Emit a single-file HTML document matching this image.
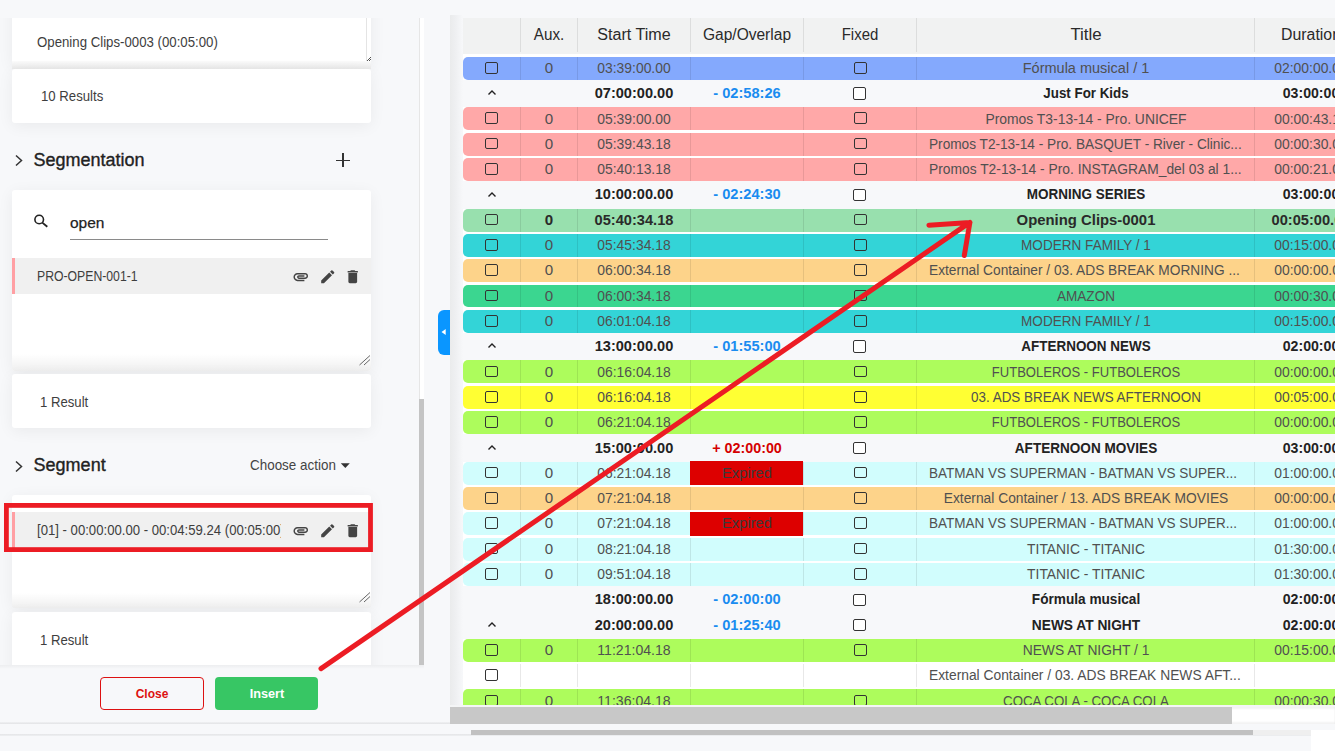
<!DOCTYPE html>
<html><head><meta charset="utf-8"><title>Schedule</title><style>
html,body{margin:0;padding:0}
body{width:1335px;height:751px;overflow:hidden;background:#f7f8fa;position:relative;font-family:"Liberation Sans",sans-serif}
.t{position:absolute;white-space:nowrap}
.b{position:absolute}
.clip{position:absolute;left:0;top:0;width:1335px;height:751px}
.card{position:absolute;background:#fff;border-radius:3px;box-shadow:0 3px 16px rgba(0,0,0,0.06)}
.cb{position:absolute;box-sizing:border-box;border:1.8px solid #333;border-radius:2px}
</style></head><body>

<div class="clip" style="clip-path:inset(18px 0 86px 0)">
<div class="card" style="left:12px;top:-20px;width:359px;height:85px"></div>
<div class="b" style="left:12.00px;top:61.30px;width:359.00px;height:7.70px;background:linear-gradient(#fbfbfb,#e9e9e9)"></div>
<div class="b" style="left:366.00px;top:0.00px;width:1.00px;height:61.00px;background:#e4e4e4"></div>
<div class="t" style="left:36.70px;top:35.00px;font-size:14.2px;line-height:14.2px;color:#3e3e3e;font-weight:normal;transform-origin:0 0;transform:scaleX(0.9321);">Opening Clips-0003 (00:05:00)</div>
<svg class="b" style="left:366px;top:55px" width="6" height="7"><path d="M1 6L5 2M3 6L5 4" stroke="#555" stroke-width="1"/></svg>
<div class="card" style="left:12px;top:69px;width:359px;height:53.6px"></div>
<div class="t" style="left:40.50px;top:89.00px;font-size:14.2px;line-height:14.2px;color:#3e3e3e;font-weight:normal;transform-origin:0 0;transform:scaleX(0.9286);">10 Results</div>
<svg class="b" style="left:12px;top:152px" width="14" height="16"><path d="M4 3.5L9.5 8.5L4 13.5" fill="none" stroke="#333" stroke-width="1.5"/></svg>
<div class="t" style="left:33.50px;top:151.00px;font-size:18px;line-height:18px;color:#222;font-weight:normal;transform-origin:0 0;-webkit-text-stroke:0.35px #222">Segmentation</div>
<div class="b" style="left:336.00px;top:159.60px;width:14.00px;height:1.70px;background:#333"></div>
<div class="b" style="left:342.20px;top:153.30px;width:1.70px;height:14.10px;background:#333"></div>
<div class="card" style="left:12px;top:190px;width:359px;height:181px"></div>
<svg class="b" style="left:30px;top:210px" width="20" height="20"><circle cx="9.2" cy="9.5" r="4.3" fill="none" stroke="#222" stroke-width="1.6"/><path d="M12.3 12.6L17.3 16.8" stroke="#222" stroke-width="1.8"/></svg>
<div class="t" style="left:70.00px;top:215.00px;font-size:15.5px;line-height:15.5px;color:#222;font-weight:normal;transform-origin:0 0;-webkit-text-stroke:0.25px #222">open</div>
<div class="b" style="left:70.00px;top:238.80px;width:258.00px;height:1.20px;background:#8a8a8a"></div>
<div class="b" style="left:12.00px;top:258.20px;width:359.00px;height:35.60px;background:#f0f0f0"></div>
<div class="b" style="left:12.00px;top:258.20px;width:3.00px;height:35.60px;background:#ff9fa3"></div>
<div class="t" style="left:36.90px;top:269.00px;font-size:14.2px;line-height:14.2px;color:#3e3e3e;font-weight:normal;transform-origin:0 0;transform:scaleX(0.8622);">PRO-OPEN-001-1</div>
<svg class="b" style="left:292.40px;top:267.70px" width="17.5" height="17.5" viewBox="0 0 24 24"><path fill="#444" d="M2 12.5C2 9.46 4.46 7 7.5 7H18c2.21 0 4 1.79 4 4s-1.79 4-4 4H9.5C8.12 15 7 13.88 7 12.5S8.12 10 9.5 10H17v2H9.41c-.55 0-.55 1 0 1H18c1.1 0 2-.9 2-2s-.9-2-2-2H7.5C5.57 9 4 10.57 4 12.5S5.57 16 7.5 16H17v2H7.5C4.46 18 2 15.54 2 12.5z"/></svg>
<svg class="b" style="left:318.70px;top:267.70px" width="17.5" height="17.5" viewBox="0 0 24 24"><path fill="#444" d="M3 17.25V21h3.75L17.81 9.94l-3.75-3.75L3 17.25zM20.71 7.04c.39-.39.39-1.02 0-1.41l-2.34-2.34c-.39-.39-1.02-.39-1.41 0l-1.83 1.83 3.75 3.75 1.83-1.83z"/></svg>
<svg class="b" style="left:343.70px;top:267.70px" width="17.5" height="17.5" viewBox="0 0 24 24"><path fill="#444" d="M6 19c0 1.1.9 2 2 2h8c1.1 0 2-.9 2-2V7H6v12zM19 4h-3.5l-1-1h-5l-1 1H5v2h14V4z"/></svg>
<div class="b" style="left:12.00px;top:354.00px;width:359.00px;height:16.50px;background:linear-gradient(rgba(255,255,255,0),#efefef);border-radius:0 0 3px 3px"></div>
<svg class="b" style="left:358px;top:354px" width="13" height="12"><path d="M1.5 11L12 1.5M6 11L12 5.5" stroke="#666" stroke-width="1"/></svg>
<div class="card" style="left:12px;top:374px;width:359px;height:53.5px"></div>
<div class="t" style="left:40.30px;top:395.00px;font-size:14.2px;line-height:14.2px;color:#3e3e3e;font-weight:normal;transform-origin:0 0;transform:scaleX(0.9272);">1 Result</div>
<svg class="b" style="left:12px;top:457.5px" width="14" height="16"><path d="M4 3.5L9.5 8.5L4 13.5" fill="none" stroke="#333" stroke-width="1.5"/></svg>
<div class="t" style="left:33.60px;top:456.00px;font-size:18px;line-height:18px;color:#222;font-weight:normal;transform-origin:0 0;-webkit-text-stroke:0.35px #222">Segment</div>
<div class="t" style="left:249.60px;top:458.00px;font-size:14.6px;line-height:14.6px;color:#444;font-weight:normal;transform-origin:0 0;transform:scaleX(0.9203);">Choose action</div>
<svg class="b" style="left:340px;top:462px" width="11" height="7"><path d="M0.8 1.2H9.8L5.3 6z" fill="#333"/></svg>
<div class="card" style="left:12px;top:495px;width:359px;height:112px"></div>
<div class="b" style="left:12.00px;top:512.10px;width:359.00px;height:35.90px;background:#f0f0f0"></div>
<div class="b" style="left:12.00px;top:512.00px;width:3.00px;height:36.00px;background:#ff9fa3"></div>
<div class="b" style="left:0;top:512px;width:280.5px;height:36px;overflow:hidden">
<div class="t" style="left:36.5px;top:11.08px;font-size:14.2px;line-height:14.2px;color:#3e3e3e;transform-origin:0 0;transform:scaleX(0.9262)">[01] - 00:00:00.00 - 00:04:59.24 (00:05:00)</div>
</div>
<svg class="b" style="left:292.40px;top:521.60px" width="17.5" height="17.5" viewBox="0 0 24 24"><path fill="#444" d="M2 12.5C2 9.46 4.46 7 7.5 7H18c2.21 0 4 1.79 4 4s-1.79 4-4 4H9.5C8.12 15 7 13.88 7 12.5S8.12 10 9.5 10H17v2H9.41c-.55 0-.55 1 0 1H18c1.1 0 2-.9 2-2s-.9-2-2-2H7.5C5.57 9 4 10.57 4 12.5S5.57 16 7.5 16H17v2H7.5C4.46 18 2 15.54 2 12.5z"/></svg>
<svg class="b" style="left:318.70px;top:521.60px" width="17.5" height="17.5" viewBox="0 0 24 24"><path fill="#444" d="M3 17.25V21h3.75L17.81 9.94l-3.75-3.75L3 17.25zM20.71 7.04c.39-.39.39-1.02 0-1.41l-2.34-2.34c-.39-.39-1.02-.39-1.41 0l-1.83 1.83 3.75 3.75 1.83-1.83z"/></svg>
<svg class="b" style="left:343.70px;top:521.60px" width="17.5" height="17.5" viewBox="0 0 24 24"><path fill="#444" d="M6 19c0 1.1.9 2 2 2h8c1.1 0 2-.9 2-2V7H6v12zM19 4h-3.5l-1-1h-5l-1 1H5v2h14V4z"/></svg>
<div class="b" style="left:12.00px;top:593.00px;width:359.00px;height:14.50px;background:linear-gradient(rgba(255,255,255,0),#efefef);border-radius:0 0 3px 3px"></div>
<svg class="b" style="left:358px;top:591px" width="13" height="12"><path d="M1.5 11L12 1.5M6 11L12 5.5" stroke="#666" stroke-width="1"/></svg>
<div class="card" style="left:12px;top:611.7px;width:359px;height:80px"></div>
<div class="t" style="left:40.30px;top:633.00px;font-size:14.2px;line-height:14.2px;color:#3e3e3e;font-weight:normal;transform-origin:0 0;transform:scaleX(0.9272);">1 Result</div>
</div>
<div class="b" style="left:0.00px;top:665.00px;width:424.00px;height:4.00px;background:linear-gradient(rgba(0,0,0,0.045),rgba(0,0,0,0))"></div>
<div class="b" style="left:419.00px;top:18.00px;width:5.00px;height:647.00px;background:#fff;border-left:1px solid #e6e6e6;box-sizing:border-box"></div>
<div class="b" style="left:419.00px;top:399.00px;width:5.00px;height:266.00px;background:#c4c4c4"></div>
<div class="b" style="left:100px;top:677px;width:104px;height:33px;box-sizing:border-box;border:1.3px solid #dd1111;border-radius:4px"></div>
<div class="t" style="left:101.90px;top:687.00px;width:100px;text-align:center;font-size:13.6px;line-height:13.6px;color:#dd1111;font-weight:bold;transform:scaleX(0.8829);">Close</div>
<div class="b" style="left:215px;top:677px;width:103px;height:33px;background:#37c664;border-radius:4px"></div>
<div class="t" style="left:216.70px;top:687.00px;width:100px;text-align:center;font-size:13.6px;line-height:13.6px;color:#fff;font-weight:bold;transform:scaleX(0.9315);">Insert</div>
<div class="b" style="left:0.00px;top:722.00px;width:1335.00px;height:2.00px;background:linear-gradient(#f0f1f3,#e2e3e5)"></div>
<div class="b" style="left:0.00px;top:733.50px;width:1311.00px;height:2.00px;background:linear-gradient(#e4e5e7,#eef0f2)"></div>
<div class="b" style="left:471.00px;top:730.00px;width:840.00px;height:5.00px;background:#efefef"></div>
<div class="b" style="left:471.00px;top:730.00px;width:782.00px;height:5.00px;background:#c1c1c1"></div>
<div class="b" style="left:1311.00px;top:730.00px;width:24.00px;height:21.00px;background:#fff"></div>
<div class="b" style="left:438.00px;top:310.00px;width:12.00px;height:45.00px;background:#0a96ff;border-radius:6px 0 0 6px"></div>
<svg class="b" style="left:441px;top:328px" width="6" height="9"><path d="M0.5 4L4.7 1V7z" fill="#fff"/></svg>
<div class="clip" style="clip-path:inset(0 0 46px 450px)">
<div class="b" style="left:450.00px;top:15.00px;width:13.00px;height:690.00px;background:linear-gradient(90deg,#eaebec 0%,#eff0f2 45%,#f7f8fa 100%)"></div>
<div class="b" style="left:463.00px;top:18.00px;width:872.00px;height:35.80px;background:#f1f2f2"></div>
<div class="b" style="left:519.70px;top:18.00px;width:1.00px;height:33.80px;background:#dcdddd"></div>
<div class="b" style="left:576.70px;top:18.00px;width:1.00px;height:33.80px;background:#dcdddd"></div>
<div class="b" style="left:689.50px;top:18.00px;width:1.00px;height:33.80px;background:#dcdddd"></div>
<div class="b" style="left:802.50px;top:18.00px;width:1.00px;height:33.80px;background:#dcdddd"></div>
<div class="b" style="left:915.70px;top:18.00px;width:1.00px;height:33.80px;background:#dcdddd"></div>
<div class="b" style="left:1253.70px;top:18.00px;width:1.00px;height:33.80px;background:#dcdddd"></div>
<div class="b" style="left:463.00px;top:53.80px;width:872.00px;height:651.20px;background:#fff"></div>
<div class="t" style="left:449.00px;top:27.00px;width:200px;text-align:center;font-size:15.6px;line-height:15.6px;color:#2a2a2a;font-weight:normal;transform:scaleX(0.9770);">Aux.</div>
<div class="t" style="left:533.90px;top:27.00px;width:200px;text-align:center;font-size:15.6px;line-height:15.6px;color:#2a2a2a;font-weight:normal;transform:scaleX(1.0326);">Start Time</div>
<div class="t" style="left:646.80px;top:27.00px;width:200px;text-align:center;font-size:15.6px;line-height:15.6px;color:#2a2a2a;font-weight:normal;transform:scaleX(0.9961);">Gap/Overlap</div>
<div class="t" style="left:759.90px;top:27.00px;width:200px;text-align:center;font-size:15.6px;line-height:15.6px;color:#2a2a2a;font-weight:normal;transform:scaleX(0.9594);">Fixed</div>
<div class="t" style="left:985.50px;top:27.00px;width:200px;text-align:center;font-size:15.6px;line-height:15.6px;color:#2a2a2a;font-weight:normal;transform:scaleX(1.0798);">Title</div>
<div class="t" style="left:1211.00px;top:27.00px;width:200px;text-align:center;font-size:15.6px;line-height:15.6px;color:#2a2a2a;font-weight:normal;transform:scaleX(1.0175);">Duration</div>
<div class="b" style="left:463.00px;top:56.80px;width:872.00px;height:22.90px;background:#84a9fd;border-radius:5px 0 0 5px"></div>
<div class="b" style="left:519.70px;top:56.80px;width:1.00px;height:22.90px;background:rgba(0,0,0,0.09)"></div>
<div class="b" style="left:576.70px;top:56.80px;width:1.00px;height:22.90px;background:rgba(0,0,0,0.09)"></div>
<div class="b" style="left:689.50px;top:56.80px;width:1.00px;height:22.90px;background:rgba(0,0,0,0.09)"></div>
<div class="b" style="left:802.50px;top:56.80px;width:1.00px;height:22.90px;background:rgba(0,0,0,0.09)"></div>
<div class="b" style="left:915.70px;top:56.80px;width:1.00px;height:22.90px;background:rgba(0,0,0,0.09)"></div>
<div class="b" style="left:1253.70px;top:56.80px;width:1.00px;height:22.90px;background:rgba(0,0,0,0.09)"></div>
<div class="cb" style="left:485.2px;top:61.85px;width:12.8px;height:11.7px"></div>
<div class="cb" style="left:854.2px;top:61.85px;width:12.8px;height:11.7px"></div>
<div class="t" style="left:519.00px;top:60.00px;width:60px;text-align:center;font-size:15.1px;line-height:15.1px;color:#505050;font-weight:normal;">0</div>
<div class="t" style="left:563.90px;top:60.00px;width:140px;text-align:center;font-size:15.1px;line-height:15.1px;color:#505050;font-weight:normal;transform:scaleX(0.9201);">03:39:00.00</div>
<div class="t" style="left:905.50px;top:60.00px;width:360px;text-align:center;font-size:15.1px;line-height:15.1px;color:#505050;font-weight:normal;transform:scaleX(0.9610);">Fórmula musical / 1</div>
<div class="t" style="left:1241.00px;top:60.00px;width:140px;text-align:center;font-size:15.1px;line-height:15.1px;color:#505050;font-weight:normal;transform:scaleX(0.9201);">02:00:00.00</div>
<div class="b" style="left:463.00px;top:79.70px;width:872.00px;height:27.71px;background:#f7f8fa"></div>
<svg class="b" style="left:486.5px;top:89.36px" width="10" height="7"><path d="M1.5 5.5L5 2L8.5 5.5" fill="none" stroke="#222" stroke-width="1.4"/></svg>
<div class="t" style="left:563.90px;top:85.00px;width:140px;text-align:center;font-size:15.3px;line-height:15.3px;color:#222;font-weight:bold;transform:scaleX(0.9526);">07:00:00.00</div>
<div class="t" style="left:676.80px;top:85.00px;width:140px;text-align:center;font-size:15.3px;line-height:15.3px;color:#1a8cf0;font-weight:bold;transform:scaleX(0.9548);">- 02:58:26</div>
<div class="cb" style="left:853.2px;top:87.36px;width:13px;height:12.6px;background:#fff"></div>
<div class="t" style="left:915.50px;top:85.00px;width:340px;text-align:center;font-size:15.3px;line-height:15.3px;color:#222;font-weight:bold;transform:scaleX(0.8725);">Just For Kids</div>
<div class="t" style="left:1241.00px;top:85.00px;width:140px;text-align:center;font-size:15.3px;line-height:15.3px;color:#222;font-weight:bold;transform:scaleX(0.9225);">03:00:00</div>
<div class="b" style="left:463.00px;top:107.41px;width:872.00px;height:22.90px;background:#ffa8a8;border-radius:5px 0 0 5px"></div>
<div class="b" style="left:519.70px;top:107.41px;width:1.00px;height:22.90px;background:rgba(0,0,0,0.09)"></div>
<div class="b" style="left:576.70px;top:107.41px;width:1.00px;height:22.90px;background:rgba(0,0,0,0.09)"></div>
<div class="b" style="left:689.50px;top:107.41px;width:1.00px;height:22.90px;background:rgba(0,0,0,0.09)"></div>
<div class="b" style="left:802.50px;top:107.41px;width:1.00px;height:22.90px;background:rgba(0,0,0,0.09)"></div>
<div class="b" style="left:915.70px;top:107.41px;width:1.00px;height:22.90px;background:rgba(0,0,0,0.09)"></div>
<div class="b" style="left:1253.70px;top:107.41px;width:1.00px;height:22.90px;background:rgba(0,0,0,0.09)"></div>
<div class="cb" style="left:485.2px;top:112.46px;width:12.8px;height:11.7px"></div>
<div class="cb" style="left:854.2px;top:112.46px;width:12.8px;height:11.7px"></div>
<div class="t" style="left:519.00px;top:111.00px;width:60px;text-align:center;font-size:15.1px;line-height:15.1px;color:#505050;font-weight:normal;">0</div>
<div class="t" style="left:563.90px;top:111.00px;width:140px;text-align:center;font-size:15.1px;line-height:15.1px;color:#505050;font-weight:normal;transform:scaleX(0.9201);">05:39:00.00</div>
<div class="t" style="left:905.50px;top:111.00px;width:360px;text-align:center;font-size:15.1px;line-height:15.1px;color:#505050;font-weight:normal;transform:scaleX(0.9199);">Promos T3-13-14 - Pro. UNICEF</div>
<div class="t" style="left:1241.00px;top:111.00px;width:140px;text-align:center;font-size:15.1px;line-height:15.1px;color:#505050;font-weight:normal;transform:scaleX(0.9201);">00:00:43.18</div>
<div class="b" style="left:463.00px;top:132.72px;width:872.00px;height:22.90px;background:#ffa8a8;border-radius:5px 0 0 5px"></div>
<div class="b" style="left:519.70px;top:132.72px;width:1.00px;height:22.90px;background:rgba(0,0,0,0.09)"></div>
<div class="b" style="left:576.70px;top:132.72px;width:1.00px;height:22.90px;background:rgba(0,0,0,0.09)"></div>
<div class="b" style="left:689.50px;top:132.72px;width:1.00px;height:22.90px;background:rgba(0,0,0,0.09)"></div>
<div class="b" style="left:802.50px;top:132.72px;width:1.00px;height:22.90px;background:rgba(0,0,0,0.09)"></div>
<div class="b" style="left:915.70px;top:132.72px;width:1.00px;height:22.90px;background:rgba(0,0,0,0.09)"></div>
<div class="b" style="left:1253.70px;top:132.72px;width:1.00px;height:22.90px;background:rgba(0,0,0,0.09)"></div>
<div class="cb" style="left:485.2px;top:137.77px;width:12.8px;height:11.7px"></div>
<div class="cb" style="left:854.2px;top:137.77px;width:12.8px;height:11.7px"></div>
<div class="t" style="left:519.00px;top:136.00px;width:60px;text-align:center;font-size:15.1px;line-height:15.1px;color:#505050;font-weight:normal;">0</div>
<div class="t" style="left:563.90px;top:136.00px;width:140px;text-align:center;font-size:15.1px;line-height:15.1px;color:#505050;font-weight:normal;transform:scaleX(0.9201);">05:39:43.18</div>
<div class="t" style="left:928.80px;top:136.00px;font-size:15.1px;line-height:15.1px;color:#505050;font-weight:normal;transform-origin:0 0;transform:scaleX(0.9041);">Promos T2-13-14 - Pro. BASQUET - River - Clinic...</div>
<div class="t" style="left:1241.00px;top:136.00px;width:140px;text-align:center;font-size:15.1px;line-height:15.1px;color:#505050;font-weight:normal;transform:scaleX(0.9201);">00:00:30.00</div>
<div class="b" style="left:463.00px;top:158.03px;width:872.00px;height:22.90px;background:#ffa8a8;border-radius:5px 0 0 5px"></div>
<div class="b" style="left:519.70px;top:158.03px;width:1.00px;height:22.90px;background:rgba(0,0,0,0.09)"></div>
<div class="b" style="left:576.70px;top:158.03px;width:1.00px;height:22.90px;background:rgba(0,0,0,0.09)"></div>
<div class="b" style="left:689.50px;top:158.03px;width:1.00px;height:22.90px;background:rgba(0,0,0,0.09)"></div>
<div class="b" style="left:802.50px;top:158.03px;width:1.00px;height:22.90px;background:rgba(0,0,0,0.09)"></div>
<div class="b" style="left:915.70px;top:158.03px;width:1.00px;height:22.90px;background:rgba(0,0,0,0.09)"></div>
<div class="b" style="left:1253.70px;top:158.03px;width:1.00px;height:22.90px;background:rgba(0,0,0,0.09)"></div>
<div class="cb" style="left:485.2px;top:163.08px;width:12.8px;height:11.7px"></div>
<div class="cb" style="left:854.2px;top:163.08px;width:12.8px;height:11.7px"></div>
<div class="t" style="left:519.00px;top:161.00px;width:60px;text-align:center;font-size:15.1px;line-height:15.1px;color:#505050;font-weight:normal;">0</div>
<div class="t" style="left:563.90px;top:161.00px;width:140px;text-align:center;font-size:15.1px;line-height:15.1px;color:#505050;font-weight:normal;transform:scaleX(0.9201);">05:40:13.18</div>
<div class="t" style="left:928.80px;top:161.00px;font-size:15.1px;line-height:15.1px;color:#505050;font-weight:normal;transform-origin:0 0;transform:scaleX(0.9151);">Promos T2-13-14 - Pro. INSTAGRAM_del 03 al 1...</div>
<div class="t" style="left:1241.00px;top:161.00px;width:140px;text-align:center;font-size:15.1px;line-height:15.1px;color:#505050;font-weight:normal;transform:scaleX(0.9201);">00:00:21.00</div>
<div class="b" style="left:463.00px;top:180.93px;width:872.00px;height:27.71px;background:#f7f8fa"></div>
<svg class="b" style="left:486.5px;top:190.58px" width="10" height="7"><path d="M1.5 5.5L5 2L8.5 5.5" fill="none" stroke="#222" stroke-width="1.4"/></svg>
<div class="t" style="left:563.90px;top:186.00px;width:140px;text-align:center;font-size:15.3px;line-height:15.3px;color:#222;font-weight:bold;transform:scaleX(0.9526);">10:00:00.00</div>
<div class="t" style="left:676.80px;top:186.00px;width:140px;text-align:center;font-size:15.3px;line-height:15.3px;color:#1a8cf0;font-weight:bold;transform:scaleX(0.9548);">- 02:24:30</div>
<div class="cb" style="left:853.2px;top:188.58px;width:13px;height:12.6px;background:#fff"></div>
<div class="t" style="left:915.50px;top:186.00px;width:340px;text-align:center;font-size:15.3px;line-height:15.3px;color:#222;font-weight:bold;transform:scaleX(0.8822);">MORNING SERIES</div>
<div class="t" style="left:1241.00px;top:186.00px;width:140px;text-align:center;font-size:15.3px;line-height:15.3px;color:#222;font-weight:bold;transform:scaleX(0.9225);">03:00:00</div>
<div class="b" style="left:463.00px;top:208.64px;width:872.00px;height:22.90px;background:#98e0ae;border-radius:5px 0 0 5px"></div>
<div class="b" style="left:519.70px;top:208.64px;width:1.00px;height:22.90px;background:rgba(0,0,0,0.09)"></div>
<div class="b" style="left:576.70px;top:208.64px;width:1.00px;height:22.90px;background:rgba(0,0,0,0.09)"></div>
<div class="b" style="left:689.50px;top:208.64px;width:1.00px;height:22.90px;background:rgba(0,0,0,0.09)"></div>
<div class="b" style="left:802.50px;top:208.64px;width:1.00px;height:22.90px;background:rgba(0,0,0,0.09)"></div>
<div class="b" style="left:915.70px;top:208.64px;width:1.00px;height:22.90px;background:rgba(0,0,0,0.09)"></div>
<div class="b" style="left:1253.70px;top:208.64px;width:1.00px;height:22.90px;background:rgba(0,0,0,0.09)"></div>
<div class="cb" style="left:485.2px;top:213.69px;width:12.8px;height:11.7px"></div>
<div class="cb" style="left:854.2px;top:213.69px;width:12.8px;height:11.7px"></div>
<div class="t" style="left:519.00px;top:212.00px;width:60px;text-align:center;font-size:15.1px;line-height:15.1px;color:#2a2a2a;font-weight:bold;">0</div>
<div class="t" style="left:563.90px;top:212.00px;width:140px;text-align:center;font-size:15.1px;line-height:15.1px;color:#2a2a2a;font-weight:bold;transform:scaleX(0.9676);">05:40:34.18</div>
<div class="t" style="left:905.50px;top:212.00px;width:360px;text-align:center;font-size:15.1px;line-height:15.1px;color:#2a2a2a;font-weight:bold;transform:scaleX(0.9853);">Opening Clips-0001</div>
<div class="t" style="left:1241.00px;top:212.00px;width:140px;text-align:center;font-size:15.1px;line-height:15.1px;color:#2a2a2a;font-weight:bold;transform:scaleX(0.9676);">00:05:00.00</div>
<div class="b" style="left:463.00px;top:233.95px;width:872.00px;height:22.90px;background:#33d4d7;border-radius:5px 0 0 5px"></div>
<div class="b" style="left:519.70px;top:233.95px;width:1.00px;height:22.90px;background:rgba(0,0,0,0.09)"></div>
<div class="b" style="left:576.70px;top:233.95px;width:1.00px;height:22.90px;background:rgba(0,0,0,0.09)"></div>
<div class="b" style="left:689.50px;top:233.95px;width:1.00px;height:22.90px;background:rgba(0,0,0,0.09)"></div>
<div class="b" style="left:802.50px;top:233.95px;width:1.00px;height:22.90px;background:rgba(0,0,0,0.09)"></div>
<div class="b" style="left:915.70px;top:233.95px;width:1.00px;height:22.90px;background:rgba(0,0,0,0.09)"></div>
<div class="b" style="left:1253.70px;top:233.95px;width:1.00px;height:22.90px;background:rgba(0,0,0,0.09)"></div>
<div class="cb" style="left:485.2px;top:239.00px;width:12.8px;height:11.7px"></div>
<div class="cb" style="left:854.2px;top:239.00px;width:12.8px;height:11.7px"></div>
<div class="t" style="left:519.00px;top:237.00px;width:60px;text-align:center;font-size:15.1px;line-height:15.1px;color:#505050;font-weight:normal;">0</div>
<div class="t" style="left:563.90px;top:237.00px;width:140px;text-align:center;font-size:15.1px;line-height:15.1px;color:#505050;font-weight:normal;transform:scaleX(0.9201);">05:45:34.18</div>
<div class="t" style="left:905.50px;top:237.00px;width:360px;text-align:center;font-size:15.1px;line-height:15.1px;color:#505050;font-weight:normal;transform:scaleX(0.8983);">MODERN FAMILY / 1</div>
<div class="t" style="left:1241.00px;top:237.00px;width:140px;text-align:center;font-size:15.1px;line-height:15.1px;color:#505050;font-weight:normal;transform:scaleX(0.9201);">00:15:00.00</div>
<div class="b" style="left:463.00px;top:259.26px;width:872.00px;height:22.90px;background:#fdd38a;border-radius:5px 0 0 5px"></div>
<div class="b" style="left:519.70px;top:259.26px;width:1.00px;height:22.90px;background:rgba(0,0,0,0.09)"></div>
<div class="b" style="left:576.70px;top:259.26px;width:1.00px;height:22.90px;background:rgba(0,0,0,0.09)"></div>
<div class="b" style="left:689.50px;top:259.26px;width:1.00px;height:22.90px;background:rgba(0,0,0,0.09)"></div>
<div class="b" style="left:802.50px;top:259.26px;width:1.00px;height:22.90px;background:rgba(0,0,0,0.09)"></div>
<div class="b" style="left:915.70px;top:259.26px;width:1.00px;height:22.90px;background:rgba(0,0,0,0.09)"></div>
<div class="b" style="left:1253.70px;top:259.26px;width:1.00px;height:22.90px;background:rgba(0,0,0,0.09)"></div>
<div class="cb" style="left:485.2px;top:264.31px;width:12.8px;height:11.7px"></div>
<div class="cb" style="left:854.2px;top:264.31px;width:12.8px;height:11.7px"></div>
<div class="t" style="left:519.00px;top:262.00px;width:60px;text-align:center;font-size:15.1px;line-height:15.1px;color:#505050;font-weight:normal;">0</div>
<div class="t" style="left:563.90px;top:262.00px;width:140px;text-align:center;font-size:15.1px;line-height:15.1px;color:#505050;font-weight:normal;transform:scaleX(0.9201);">06:00:34.18</div>
<div class="t" style="left:928.80px;top:262.00px;font-size:15.1px;line-height:15.1px;color:#505050;font-weight:normal;transform-origin:0 0;transform:scaleX(0.9083);">External Container / 03. ADS BREAK MORNING ...</div>
<div class="t" style="left:1241.00px;top:262.00px;width:140px;text-align:center;font-size:15.1px;line-height:15.1px;color:#505050;font-weight:normal;transform:scaleX(0.9201);">00:00:00.00</div>
<div class="b" style="left:463.00px;top:284.56px;width:872.00px;height:22.90px;background:#3bd690;border-radius:5px 0 0 5px"></div>
<div class="b" style="left:519.70px;top:284.56px;width:1.00px;height:22.90px;background:rgba(0,0,0,0.09)"></div>
<div class="b" style="left:576.70px;top:284.56px;width:1.00px;height:22.90px;background:rgba(0,0,0,0.09)"></div>
<div class="b" style="left:689.50px;top:284.56px;width:1.00px;height:22.90px;background:rgba(0,0,0,0.09)"></div>
<div class="b" style="left:802.50px;top:284.56px;width:1.00px;height:22.90px;background:rgba(0,0,0,0.09)"></div>
<div class="b" style="left:915.70px;top:284.56px;width:1.00px;height:22.90px;background:rgba(0,0,0,0.09)"></div>
<div class="b" style="left:1253.70px;top:284.56px;width:1.00px;height:22.90px;background:rgba(0,0,0,0.09)"></div>
<div class="cb" style="left:485.2px;top:289.61px;width:12.8px;height:11.7px"></div>
<div class="cb" style="left:854.2px;top:289.61px;width:12.8px;height:11.7px"></div>
<div class="t" style="left:519.00px;top:288.00px;width:60px;text-align:center;font-size:15.1px;line-height:15.1px;color:#505050;font-weight:normal;">0</div>
<div class="t" style="left:563.90px;top:288.00px;width:140px;text-align:center;font-size:15.1px;line-height:15.1px;color:#505050;font-weight:normal;transform:scaleX(0.9201);">06:00:34.18</div>
<div class="t" style="left:905.50px;top:288.00px;width:360px;text-align:center;font-size:15.1px;line-height:15.1px;color:#505050;font-weight:normal;transform:scaleX(0.8994);">AMAZON</div>
<div class="t" style="left:1241.00px;top:288.00px;width:140px;text-align:center;font-size:15.1px;line-height:15.1px;color:#505050;font-weight:normal;transform:scaleX(0.9201);">00:00:30.00</div>
<div class="b" style="left:463.00px;top:309.87px;width:872.00px;height:22.90px;background:#33d4d7;border-radius:5px 0 0 5px"></div>
<div class="b" style="left:519.70px;top:309.87px;width:1.00px;height:22.90px;background:rgba(0,0,0,0.09)"></div>
<div class="b" style="left:576.70px;top:309.87px;width:1.00px;height:22.90px;background:rgba(0,0,0,0.09)"></div>
<div class="b" style="left:689.50px;top:309.87px;width:1.00px;height:22.90px;background:rgba(0,0,0,0.09)"></div>
<div class="b" style="left:802.50px;top:309.87px;width:1.00px;height:22.90px;background:rgba(0,0,0,0.09)"></div>
<div class="b" style="left:915.70px;top:309.87px;width:1.00px;height:22.90px;background:rgba(0,0,0,0.09)"></div>
<div class="b" style="left:1253.70px;top:309.87px;width:1.00px;height:22.90px;background:rgba(0,0,0,0.09)"></div>
<div class="cb" style="left:485.2px;top:314.92px;width:12.8px;height:11.7px"></div>
<div class="cb" style="left:854.2px;top:314.92px;width:12.8px;height:11.7px"></div>
<div class="t" style="left:519.00px;top:313.00px;width:60px;text-align:center;font-size:15.1px;line-height:15.1px;color:#505050;font-weight:normal;">0</div>
<div class="t" style="left:563.90px;top:313.00px;width:140px;text-align:center;font-size:15.1px;line-height:15.1px;color:#505050;font-weight:normal;transform:scaleX(0.9201);">06:01:04.18</div>
<div class="t" style="left:905.50px;top:313.00px;width:360px;text-align:center;font-size:15.1px;line-height:15.1px;color:#505050;font-weight:normal;transform:scaleX(0.8983);">MODERN FAMILY / 1</div>
<div class="t" style="left:1241.00px;top:313.00px;width:140px;text-align:center;font-size:15.1px;line-height:15.1px;color:#505050;font-weight:normal;transform:scaleX(0.9201);">00:15:00.00</div>
<div class="b" style="left:463.00px;top:332.77px;width:872.00px;height:27.71px;background:#f7f8fa"></div>
<svg class="b" style="left:486.5px;top:342.43px" width="10" height="7"><path d="M1.5 5.5L5 2L8.5 5.5" fill="none" stroke="#222" stroke-width="1.4"/></svg>
<div class="t" style="left:563.90px;top:338.00px;width:140px;text-align:center;font-size:15.3px;line-height:15.3px;color:#222;font-weight:bold;transform:scaleX(0.9526);">13:00:00.00</div>
<div class="t" style="left:676.80px;top:338.00px;width:140px;text-align:center;font-size:15.3px;line-height:15.3px;color:#1a8cf0;font-weight:bold;transform:scaleX(0.9548);">- 01:55:00</div>
<div class="cb" style="left:853.2px;top:340.43px;width:13px;height:12.6px;background:#fff"></div>
<div class="t" style="left:915.50px;top:338.00px;width:340px;text-align:center;font-size:15.3px;line-height:15.3px;color:#222;font-weight:bold;transform:scaleX(0.8793);">AFTERNOON NEWS</div>
<div class="t" style="left:1241.00px;top:338.00px;width:140px;text-align:center;font-size:15.3px;line-height:15.3px;color:#222;font-weight:bold;transform:scaleX(0.9225);">02:00:00</div>
<div class="b" style="left:463.00px;top:360.48px;width:872.00px;height:22.90px;background:#adfc5c;border-radius:5px 0 0 5px"></div>
<div class="b" style="left:519.70px;top:360.48px;width:1.00px;height:22.90px;background:rgba(0,0,0,0.09)"></div>
<div class="b" style="left:576.70px;top:360.48px;width:1.00px;height:22.90px;background:rgba(0,0,0,0.09)"></div>
<div class="b" style="left:689.50px;top:360.48px;width:1.00px;height:22.90px;background:rgba(0,0,0,0.09)"></div>
<div class="b" style="left:802.50px;top:360.48px;width:1.00px;height:22.90px;background:rgba(0,0,0,0.09)"></div>
<div class="b" style="left:915.70px;top:360.48px;width:1.00px;height:22.90px;background:rgba(0,0,0,0.09)"></div>
<div class="b" style="left:1253.70px;top:360.48px;width:1.00px;height:22.90px;background:rgba(0,0,0,0.09)"></div>
<div class="cb" style="left:485.2px;top:365.53px;width:12.8px;height:11.7px"></div>
<div class="cb" style="left:854.2px;top:365.53px;width:12.8px;height:11.7px"></div>
<div class="t" style="left:519.00px;top:364.00px;width:60px;text-align:center;font-size:15.1px;line-height:15.1px;color:#505050;font-weight:normal;">0</div>
<div class="t" style="left:563.90px;top:364.00px;width:140px;text-align:center;font-size:15.1px;line-height:15.1px;color:#505050;font-weight:normal;transform:scaleX(0.9201);">06:16:04.18</div>
<div class="t" style="left:905.50px;top:364.00px;width:360px;text-align:center;font-size:15.1px;line-height:15.1px;color:#505050;font-weight:normal;transform:scaleX(0.8641);">FUTBOLEROS - FUTBOLEROS</div>
<div class="t" style="left:1241.00px;top:364.00px;width:140px;text-align:center;font-size:15.1px;line-height:15.1px;color:#505050;font-weight:normal;transform:scaleX(0.9201);">00:00:00.00</div>
<div class="b" style="left:463.00px;top:385.79px;width:872.00px;height:22.90px;background:#ffff33;border-radius:5px 0 0 5px"></div>
<div class="b" style="left:519.70px;top:385.79px;width:1.00px;height:22.90px;background:rgba(0,0,0,0.09)"></div>
<div class="b" style="left:576.70px;top:385.79px;width:1.00px;height:22.90px;background:rgba(0,0,0,0.09)"></div>
<div class="b" style="left:689.50px;top:385.79px;width:1.00px;height:22.90px;background:rgba(0,0,0,0.09)"></div>
<div class="b" style="left:802.50px;top:385.79px;width:1.00px;height:22.90px;background:rgba(0,0,0,0.09)"></div>
<div class="b" style="left:915.70px;top:385.79px;width:1.00px;height:22.90px;background:rgba(0,0,0,0.09)"></div>
<div class="b" style="left:1253.70px;top:385.79px;width:1.00px;height:22.90px;background:rgba(0,0,0,0.09)"></div>
<div class="cb" style="left:485.2px;top:390.84px;width:12.8px;height:11.7px"></div>
<div class="cb" style="left:854.2px;top:390.84px;width:12.8px;height:11.7px"></div>
<div class="t" style="left:519.00px;top:389.00px;width:60px;text-align:center;font-size:15.1px;line-height:15.1px;color:#505050;font-weight:normal;">0</div>
<div class="t" style="left:563.90px;top:389.00px;width:140px;text-align:center;font-size:15.1px;line-height:15.1px;color:#505050;font-weight:normal;transform:scaleX(0.9201);">06:16:04.18</div>
<div class="t" style="left:905.50px;top:389.00px;width:360px;text-align:center;font-size:15.1px;line-height:15.1px;color:#505050;font-weight:normal;transform:scaleX(0.8900);">03. ADS BREAK NEWS AFTERNOON</div>
<div class="t" style="left:1241.00px;top:389.00px;width:140px;text-align:center;font-size:15.1px;line-height:15.1px;color:#505050;font-weight:normal;transform:scaleX(0.9201);">00:05:00.00</div>
<div class="b" style="left:463.00px;top:411.10px;width:872.00px;height:22.90px;background:#adfc5c;border-radius:5px 0 0 5px"></div>
<div class="b" style="left:519.70px;top:411.10px;width:1.00px;height:22.90px;background:rgba(0,0,0,0.09)"></div>
<div class="b" style="left:576.70px;top:411.10px;width:1.00px;height:22.90px;background:rgba(0,0,0,0.09)"></div>
<div class="b" style="left:689.50px;top:411.10px;width:1.00px;height:22.90px;background:rgba(0,0,0,0.09)"></div>
<div class="b" style="left:802.50px;top:411.10px;width:1.00px;height:22.90px;background:rgba(0,0,0,0.09)"></div>
<div class="b" style="left:915.70px;top:411.10px;width:1.00px;height:22.90px;background:rgba(0,0,0,0.09)"></div>
<div class="b" style="left:1253.70px;top:411.10px;width:1.00px;height:22.90px;background:rgba(0,0,0,0.09)"></div>
<div class="cb" style="left:485.2px;top:416.15px;width:12.8px;height:11.7px"></div>
<div class="cb" style="left:854.2px;top:416.15px;width:12.8px;height:11.7px"></div>
<div class="t" style="left:519.00px;top:414.00px;width:60px;text-align:center;font-size:15.1px;line-height:15.1px;color:#505050;font-weight:normal;">0</div>
<div class="t" style="left:563.90px;top:414.00px;width:140px;text-align:center;font-size:15.1px;line-height:15.1px;color:#505050;font-weight:normal;transform:scaleX(0.9201);">06:21:04.18</div>
<div class="t" style="left:905.50px;top:414.00px;width:360px;text-align:center;font-size:15.1px;line-height:15.1px;color:#505050;font-weight:normal;transform:scaleX(0.8641);">FUTBOLEROS - FUTBOLEROS</div>
<div class="t" style="left:1241.00px;top:414.00px;width:140px;text-align:center;font-size:15.1px;line-height:15.1px;color:#505050;font-weight:normal;transform:scaleX(0.9201);">00:00:00.00</div>
<div class="b" style="left:463.00px;top:434.00px;width:872.00px;height:27.71px;background:#f7f8fa"></div>
<svg class="b" style="left:486.5px;top:443.65px" width="10" height="7"><path d="M1.5 5.5L5 2L8.5 5.5" fill="none" stroke="#222" stroke-width="1.4"/></svg>
<div class="t" style="left:563.90px;top:440.00px;width:140px;text-align:center;font-size:15.3px;line-height:15.3px;color:#222;font-weight:bold;transform:scaleX(0.9526);">15:00:00.00</div>
<div class="t" style="left:676.80px;top:440.00px;width:140px;text-align:center;font-size:15.3px;line-height:15.3px;color:#d50000;font-weight:bold;transform:scaleX(0.9364);">+ 02:00:00</div>
<div class="cb" style="left:853.2px;top:441.65px;width:13px;height:12.6px;background:#fff"></div>
<div class="t" style="left:915.50px;top:440.00px;width:340px;text-align:center;font-size:15.3px;line-height:15.3px;color:#222;font-weight:bold;transform:scaleX(0.8863);">AFTERNOON MOVIES</div>
<div class="t" style="left:1241.00px;top:440.00px;width:140px;text-align:center;font-size:15.3px;line-height:15.3px;color:#222;font-weight:bold;transform:scaleX(0.9225);">03:00:00</div>
<div class="b" style="left:463.00px;top:461.71px;width:872.00px;height:22.90px;background:#d1fdfd;border-radius:5px 0 0 5px"></div>
<div class="b" style="left:519.70px;top:461.71px;width:1.00px;height:22.90px;background:rgba(0,0,0,0.09)"></div>
<div class="b" style="left:576.70px;top:461.71px;width:1.00px;height:22.90px;background:rgba(0,0,0,0.09)"></div>
<div class="b" style="left:689.50px;top:461.71px;width:1.00px;height:22.90px;background:rgba(0,0,0,0.09)"></div>
<div class="b" style="left:802.50px;top:461.71px;width:1.00px;height:22.90px;background:rgba(0,0,0,0.09)"></div>
<div class="b" style="left:915.70px;top:461.71px;width:1.00px;height:22.90px;background:rgba(0,0,0,0.09)"></div>
<div class="b" style="left:1253.70px;top:461.71px;width:1.00px;height:22.90px;background:rgba(0,0,0,0.09)"></div>
<div class="b" style="left:690.30px;top:461.41px;width:113.00px;height:23.50px;background:#dd0000"></div>
<div class="t" style="left:676.80px;top:465.00px;width:140px;text-align:center;font-size:15.1px;line-height:15.1px;color:#3a3a3a;font-weight:normal;transform:scaleX(0.9766);">Expired</div>
<div class="cb" style="left:485.2px;top:466.76px;width:12.8px;height:11.7px"></div>
<div class="cb" style="left:854.2px;top:466.76px;width:12.8px;height:11.7px"></div>
<div class="t" style="left:519.00px;top:465.00px;width:60px;text-align:center;font-size:15.1px;line-height:15.1px;color:#505050;font-weight:normal;">0</div>
<div class="t" style="left:563.90px;top:465.00px;width:140px;text-align:center;font-size:15.1px;line-height:15.1px;color:#505050;font-weight:normal;transform:scaleX(0.9201);">06:21:04.18</div>
<div class="t" style="left:928.80px;top:465.00px;font-size:15.1px;line-height:15.1px;color:#505050;font-weight:normal;transform-origin:0 0;transform:scaleX(0.8952);">BATMAN VS SUPERMAN - BATMAN VS SUPER...</div>
<div class="t" style="left:1241.00px;top:465.00px;width:140px;text-align:center;font-size:15.1px;line-height:15.1px;color:#505050;font-weight:normal;transform:scaleX(0.9201);">01:00:00.00</div>
<div class="b" style="left:463.00px;top:487.02px;width:872.00px;height:22.90px;background:#fdd38a;border-radius:5px 0 0 5px"></div>
<div class="b" style="left:519.70px;top:487.02px;width:1.00px;height:22.90px;background:rgba(0,0,0,0.09)"></div>
<div class="b" style="left:576.70px;top:487.02px;width:1.00px;height:22.90px;background:rgba(0,0,0,0.09)"></div>
<div class="b" style="left:689.50px;top:487.02px;width:1.00px;height:22.90px;background:rgba(0,0,0,0.09)"></div>
<div class="b" style="left:802.50px;top:487.02px;width:1.00px;height:22.90px;background:rgba(0,0,0,0.09)"></div>
<div class="b" style="left:915.70px;top:487.02px;width:1.00px;height:22.90px;background:rgba(0,0,0,0.09)"></div>
<div class="b" style="left:1253.70px;top:487.02px;width:1.00px;height:22.90px;background:rgba(0,0,0,0.09)"></div>
<div class="cb" style="left:485.2px;top:492.07px;width:12.8px;height:11.7px"></div>
<div class="cb" style="left:854.2px;top:492.07px;width:12.8px;height:11.7px"></div>
<div class="t" style="left:519.00px;top:490.00px;width:60px;text-align:center;font-size:15.1px;line-height:15.1px;color:#505050;font-weight:normal;">0</div>
<div class="t" style="left:563.90px;top:490.00px;width:140px;text-align:center;font-size:15.1px;line-height:15.1px;color:#505050;font-weight:normal;transform:scaleX(0.9201);">07:21:04.18</div>
<div class="t" style="left:905.50px;top:490.00px;width:360px;text-align:center;font-size:15.1px;line-height:15.1px;color:#505050;font-weight:normal;transform:scaleX(0.9144);">External Container / 13. ADS BREAK MOVIES</div>
<div class="t" style="left:1241.00px;top:490.00px;width:140px;text-align:center;font-size:15.1px;line-height:15.1px;color:#505050;font-weight:normal;transform:scaleX(0.9201);">00:00:00.00</div>
<div class="b" style="left:463.00px;top:512.33px;width:872.00px;height:22.90px;background:#d1fdfd;border-radius:5px 0 0 5px"></div>
<div class="b" style="left:519.70px;top:512.33px;width:1.00px;height:22.90px;background:rgba(0,0,0,0.09)"></div>
<div class="b" style="left:576.70px;top:512.33px;width:1.00px;height:22.90px;background:rgba(0,0,0,0.09)"></div>
<div class="b" style="left:689.50px;top:512.33px;width:1.00px;height:22.90px;background:rgba(0,0,0,0.09)"></div>
<div class="b" style="left:802.50px;top:512.33px;width:1.00px;height:22.90px;background:rgba(0,0,0,0.09)"></div>
<div class="b" style="left:915.70px;top:512.33px;width:1.00px;height:22.90px;background:rgba(0,0,0,0.09)"></div>
<div class="b" style="left:1253.70px;top:512.33px;width:1.00px;height:22.90px;background:rgba(0,0,0,0.09)"></div>
<div class="b" style="left:690.30px;top:512.03px;width:113.00px;height:23.50px;background:#dd0000"></div>
<div class="t" style="left:676.80px;top:515.00px;width:140px;text-align:center;font-size:15.1px;line-height:15.1px;color:#3a3a3a;font-weight:normal;transform:scaleX(0.9766);">Expired</div>
<div class="cb" style="left:485.2px;top:517.38px;width:12.8px;height:11.7px"></div>
<div class="cb" style="left:854.2px;top:517.38px;width:12.8px;height:11.7px"></div>
<div class="t" style="left:519.00px;top:515.00px;width:60px;text-align:center;font-size:15.1px;line-height:15.1px;color:#505050;font-weight:normal;">0</div>
<div class="t" style="left:563.90px;top:515.00px;width:140px;text-align:center;font-size:15.1px;line-height:15.1px;color:#505050;font-weight:normal;transform:scaleX(0.9201);">07:21:04.18</div>
<div class="t" style="left:928.80px;top:515.00px;font-size:15.1px;line-height:15.1px;color:#505050;font-weight:normal;transform-origin:0 0;transform:scaleX(0.8952);">BATMAN VS SUPERMAN - BATMAN VS SUPER...</div>
<div class="t" style="left:1241.00px;top:515.00px;width:140px;text-align:center;font-size:15.1px;line-height:15.1px;color:#505050;font-weight:normal;transform:scaleX(0.9201);">01:00:00.00</div>
<div class="b" style="left:463.00px;top:537.63px;width:872.00px;height:22.90px;background:#d1fdfd;border-radius:5px 0 0 5px"></div>
<div class="b" style="left:519.70px;top:537.63px;width:1.00px;height:22.90px;background:rgba(0,0,0,0.09)"></div>
<div class="b" style="left:576.70px;top:537.63px;width:1.00px;height:22.90px;background:rgba(0,0,0,0.09)"></div>
<div class="b" style="left:689.50px;top:537.63px;width:1.00px;height:22.90px;background:rgba(0,0,0,0.09)"></div>
<div class="b" style="left:802.50px;top:537.63px;width:1.00px;height:22.90px;background:rgba(0,0,0,0.09)"></div>
<div class="b" style="left:915.70px;top:537.63px;width:1.00px;height:22.90px;background:rgba(0,0,0,0.09)"></div>
<div class="b" style="left:1253.70px;top:537.63px;width:1.00px;height:22.90px;background:rgba(0,0,0,0.09)"></div>
<div class="cb" style="left:485.2px;top:542.68px;width:12.8px;height:11.7px"></div>
<div class="cb" style="left:854.2px;top:542.68px;width:12.8px;height:11.7px"></div>
<div class="t" style="left:519.00px;top:541.00px;width:60px;text-align:center;font-size:15.1px;line-height:15.1px;color:#505050;font-weight:normal;">0</div>
<div class="t" style="left:563.90px;top:541.00px;width:140px;text-align:center;font-size:15.1px;line-height:15.1px;color:#505050;font-weight:normal;transform:scaleX(0.9201);">08:21:04.18</div>
<div class="t" style="left:905.50px;top:541.00px;width:360px;text-align:center;font-size:15.1px;line-height:15.1px;color:#505050;font-weight:normal;transform:scaleX(0.9186);">TITANIC - TITANIC</div>
<div class="t" style="left:1241.00px;top:541.00px;width:140px;text-align:center;font-size:15.1px;line-height:15.1px;color:#505050;font-weight:normal;transform:scaleX(0.9201);">01:30:00.00</div>
<div class="b" style="left:463.00px;top:562.94px;width:872.00px;height:22.90px;background:#d1fdfd;border-radius:5px 0 0 5px"></div>
<div class="b" style="left:519.70px;top:562.94px;width:1.00px;height:22.90px;background:rgba(0,0,0,0.09)"></div>
<div class="b" style="left:576.70px;top:562.94px;width:1.00px;height:22.90px;background:rgba(0,0,0,0.09)"></div>
<div class="b" style="left:689.50px;top:562.94px;width:1.00px;height:22.90px;background:rgba(0,0,0,0.09)"></div>
<div class="b" style="left:802.50px;top:562.94px;width:1.00px;height:22.90px;background:rgba(0,0,0,0.09)"></div>
<div class="b" style="left:915.70px;top:562.94px;width:1.00px;height:22.90px;background:rgba(0,0,0,0.09)"></div>
<div class="b" style="left:1253.70px;top:562.94px;width:1.00px;height:22.90px;background:rgba(0,0,0,0.09)"></div>
<div class="cb" style="left:485.2px;top:567.99px;width:12.8px;height:11.7px"></div>
<div class="cb" style="left:854.2px;top:567.99px;width:12.8px;height:11.7px"></div>
<div class="t" style="left:519.00px;top:566.00px;width:60px;text-align:center;font-size:15.1px;line-height:15.1px;color:#505050;font-weight:normal;">0</div>
<div class="t" style="left:563.90px;top:566.00px;width:140px;text-align:center;font-size:15.1px;line-height:15.1px;color:#505050;font-weight:normal;transform:scaleX(0.9201);">09:51:04.18</div>
<div class="t" style="left:905.50px;top:566.00px;width:360px;text-align:center;font-size:15.1px;line-height:15.1px;color:#505050;font-weight:normal;transform:scaleX(0.9186);">TITANIC - TITANIC</div>
<div class="t" style="left:1241.00px;top:566.00px;width:140px;text-align:center;font-size:15.1px;line-height:15.1px;color:#505050;font-weight:normal;transform:scaleX(0.9201);">01:30:00.00</div>
<div class="b" style="left:463.00px;top:585.84px;width:872.00px;height:27.71px;background:#f7f8fa"></div>
<div class="t" style="left:563.90px;top:591.00px;width:140px;text-align:center;font-size:15.3px;line-height:15.3px;color:#222;font-weight:bold;transform:scaleX(0.9526);">18:00:00.00</div>
<div class="t" style="left:676.80px;top:591.00px;width:140px;text-align:center;font-size:15.3px;line-height:15.3px;color:#1a8cf0;font-weight:bold;transform:scaleX(0.9548);">- 02:00:00</div>
<div class="cb" style="left:853.2px;top:593.50px;width:13px;height:12.6px;background:#fff"></div>
<div class="t" style="left:915.50px;top:591.00px;width:340px;text-align:center;font-size:15.3px;line-height:15.3px;color:#222;font-weight:bold;transform:scaleX(0.8915);">Fórmula musical</div>
<div class="t" style="left:1241.00px;top:591.00px;width:140px;text-align:center;font-size:15.3px;line-height:15.3px;color:#222;font-weight:bold;transform:scaleX(0.9225);">02:00:00</div>
<div class="b" style="left:463.00px;top:611.15px;width:872.00px;height:27.71px;background:#f7f8fa"></div>
<svg class="b" style="left:486.5px;top:620.80px" width="10" height="7"><path d="M1.5 5.5L5 2L8.5 5.5" fill="none" stroke="#222" stroke-width="1.4"/></svg>
<div class="t" style="left:563.90px;top:617.00px;width:140px;text-align:center;font-size:15.3px;line-height:15.3px;color:#222;font-weight:bold;transform:scaleX(0.9526);">20:00:00.00</div>
<div class="t" style="left:676.80px;top:617.00px;width:140px;text-align:center;font-size:15.3px;line-height:15.3px;color:#1a8cf0;font-weight:bold;transform:scaleX(0.9548);">- 01:25:40</div>
<div class="cb" style="left:853.2px;top:618.80px;width:13px;height:12.6px;background:#fff"></div>
<div class="t" style="left:915.50px;top:617.00px;width:340px;text-align:center;font-size:15.3px;line-height:15.3px;color:#222;font-weight:bold;transform:scaleX(0.8982);">NEWS AT NIGHT</div>
<div class="t" style="left:1241.00px;top:617.00px;width:140px;text-align:center;font-size:15.3px;line-height:15.3px;color:#222;font-weight:bold;transform:scaleX(0.9225);">02:00:00</div>
<div class="b" style="left:463.00px;top:638.86px;width:872.00px;height:22.90px;background:#adfc5c;border-radius:5px 0 0 5px"></div>
<div class="b" style="left:519.70px;top:638.86px;width:1.00px;height:22.90px;background:rgba(0,0,0,0.09)"></div>
<div class="b" style="left:576.70px;top:638.86px;width:1.00px;height:22.90px;background:rgba(0,0,0,0.09)"></div>
<div class="b" style="left:689.50px;top:638.86px;width:1.00px;height:22.90px;background:rgba(0,0,0,0.09)"></div>
<div class="b" style="left:802.50px;top:638.86px;width:1.00px;height:22.90px;background:rgba(0,0,0,0.09)"></div>
<div class="b" style="left:915.70px;top:638.86px;width:1.00px;height:22.90px;background:rgba(0,0,0,0.09)"></div>
<div class="b" style="left:1253.70px;top:638.86px;width:1.00px;height:22.90px;background:rgba(0,0,0,0.09)"></div>
<div class="cb" style="left:485.2px;top:643.91px;width:12.8px;height:11.7px"></div>
<div class="cb" style="left:854.2px;top:643.91px;width:12.8px;height:11.7px"></div>
<div class="t" style="left:519.00px;top:642.00px;width:60px;text-align:center;font-size:15.1px;line-height:15.1px;color:#505050;font-weight:normal;">0</div>
<div class="t" style="left:563.90px;top:642.00px;width:140px;text-align:center;font-size:15.1px;line-height:15.1px;color:#505050;font-weight:normal;transform:scaleX(0.9333);">11:21:04.18</div>
<div class="t" style="left:905.50px;top:642.00px;width:360px;text-align:center;font-size:15.1px;line-height:15.1px;color:#505050;font-weight:normal;transform:scaleX(0.9152);">NEWS AT NIGHT / 1</div>
<div class="t" style="left:1241.00px;top:642.00px;width:140px;text-align:center;font-size:15.1px;line-height:15.1px;color:#505050;font-weight:normal;transform:scaleX(0.9201);">00:15:00.00</div>
<div class="b" style="left:463.00px;top:664.17px;width:872.00px;height:22.90px;background:#ffffff;border-radius:5px 0 0 5px"></div>
<div class="b" style="left:519.70px;top:664.17px;width:1.00px;height:22.90px;background:#e8e8e8"></div>
<div class="b" style="left:576.70px;top:664.17px;width:1.00px;height:22.90px;background:#e8e8e8"></div>
<div class="b" style="left:689.50px;top:664.17px;width:1.00px;height:22.90px;background:#e8e8e8"></div>
<div class="b" style="left:802.50px;top:664.17px;width:1.00px;height:22.90px;background:#e8e8e8"></div>
<div class="b" style="left:915.70px;top:664.17px;width:1.00px;height:22.90px;background:#e8e8e8"></div>
<div class="b" style="left:1253.70px;top:664.17px;width:1.00px;height:22.90px;background:#e8e8e8"></div>
<div class="cb" style="left:485.2px;top:669.22px;width:12.8px;height:11.7px"></div>
<div class="t" style="left:928.80px;top:667.00px;font-size:15.1px;line-height:15.1px;color:#505050;font-weight:normal;transform-origin:0 0;transform:scaleX(0.9154);">External Container / 03. ADS BREAK NEWS AFT...</div>
<div class="b" style="left:463.00px;top:689.47px;width:872.00px;height:22.90px;background:#adfc5c;border-radius:5px 0 0 5px"></div>
<div class="b" style="left:519.70px;top:689.47px;width:1.00px;height:22.90px;background:rgba(0,0,0,0.09)"></div>
<div class="b" style="left:576.70px;top:689.47px;width:1.00px;height:22.90px;background:rgba(0,0,0,0.09)"></div>
<div class="b" style="left:689.50px;top:689.47px;width:1.00px;height:22.90px;background:rgba(0,0,0,0.09)"></div>
<div class="b" style="left:802.50px;top:689.47px;width:1.00px;height:22.90px;background:rgba(0,0,0,0.09)"></div>
<div class="b" style="left:915.70px;top:689.47px;width:1.00px;height:22.90px;background:rgba(0,0,0,0.09)"></div>
<div class="b" style="left:1253.70px;top:689.47px;width:1.00px;height:22.90px;background:rgba(0,0,0,0.09)"></div>
<div class="cb" style="left:485.2px;top:694.52px;width:12.8px;height:11.7px"></div>
<div class="cb" style="left:854.2px;top:694.52px;width:12.8px;height:11.7px"></div>
<div class="t" style="left:519.00px;top:693.00px;width:60px;text-align:center;font-size:15.1px;line-height:15.1px;color:#505050;font-weight:normal;">0</div>
<div class="t" style="left:563.90px;top:693.00px;width:140px;text-align:center;font-size:15.1px;line-height:15.1px;color:#505050;font-weight:normal;transform:scaleX(0.9333);">11:36:04.18</div>
<div class="t" style="left:905.50px;top:693.00px;width:360px;text-align:center;font-size:15.1px;line-height:15.1px;color:#505050;font-weight:normal;transform:scaleX(0.8787);">COCA COLA - COCA COLA</div>
<div class="t" style="left:1241.00px;top:693.00px;width:140px;text-align:center;font-size:15.1px;line-height:15.1px;color:#505050;font-weight:normal;transform:scaleX(0.9201);">00:00:30.00</div>
</div>
<div class="b" style="left:450.00px;top:705.00px;width:885.00px;height:2.30px;background:#f4f5f6"></div>
<div class="b" style="left:450.00px;top:707.30px;width:885.00px;height:16.30px;background:#fff;box-shadow:inset 0 2px 2px rgba(0,0,0,0.05), inset 0 -2px 2px rgba(0,0,0,0.05)"></div>
<div class="b" style="left:450.00px;top:707.30px;width:782.00px;height:16.30px;background:#c8c8c8"></div>
<svg class="b" style="left:0;top:0" width="1335" height="751">
<rect x="6.4" y="505.4" width="364.1" height="44.2" fill="none" stroke="#ec1c24" stroke-width="4.8"/>
<path d="M321 668.6L969.9 222.4M928.9 225.2L969.9 222.4L964.3 255.5" fill="none" stroke="#ec1c24" stroke-width="5" stroke-linecap="round" stroke-linejoin="round"/>
</svg>
</body></html>
